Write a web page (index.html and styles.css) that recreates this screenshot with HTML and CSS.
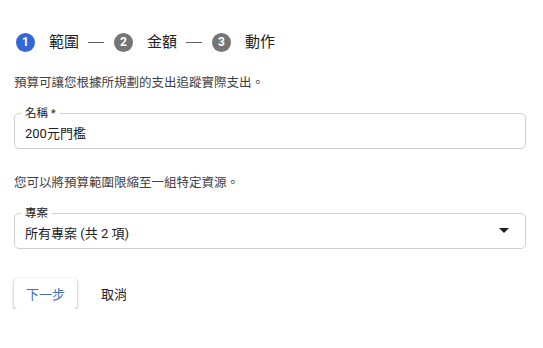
FILE: index.html
```html
<!DOCTYPE html>
<html lang="zh-Hant">
<head>
<meta charset="utf-8">
<link rel="stylesheet" href="styles.css">
</head>
<body>
<div class="page">
  <div class="stepper">
    <div class="step"><span class="num active">1</span><span class="step-label">範圍</span></div>
    <span class="dash"></span>
    <div class="step"><span class="num">2</span><span class="step-label">金額</span></div>
    <span class="dash"></span>
    <div class="step"><span class="num">3</span><span class="step-label">動作</span></div>
  </div>

  <p class="desc">預算可讓您根據所規劃的支出追蹤實際支出。</p>

  <div class="field">
    <span class="field-label">名稱 *</span>
    <span class="field-value">200元門檻</span>
  </div>

  <p class="desc desc2">您可以將預算範圍限縮至一組特定資源。</p>

  <div class="field select">
    <span class="field-label">專案</span>
    <span class="field-value">所有專案 (共 2 項)</span>
    <svg class="arrow" width="10" height="5" viewBox="0 0 10 5"><path d="M0 0h10L5 5z" fill="#202124"/></svg>
  </div>

  <div class="actions">
    <button class="btn primary">下一步</button>
    <button class="btn text">取消</button>
  </div>
</div>
</body>
</html>
```
FILE: styles.css
```css
html, body {
  margin: 0;
  padding: 0;
  background: #fff;
}
body {
  font-family: Roboto, "Noto Sans CJK TC", sans-serif;
  color: #202124;
}
.page {
  padding: 32px 17px 0 14px;
}
.stepper {
  display: flex;
  align-items: center;
  height: 20px;
  padding-left: 2px;
}
.step {
  display: flex;
  align-items: center;
}
.num {
  width: 19px;
  height: 19px;
  border-radius: 50%;
  background: #757575;
  color: #fff;
  font-size: 12px;
  font-weight: 700;
  display: flex;
  align-items: center;
  justify-content: center;
}
.num.active {
  background: #3367d6;
}
.step-label {
  font-size: 15px;
  margin-left: 14px;
  line-height: 20px;
}
.dash {
  width: 16px;
  height: 1px;
  background: #5f6368;
  margin: 0 10px 0 9px;
}
.desc {
  margin: 23px 0 0 0;
  font-size: 12.5px;
  line-height: 16px;
  color: #3c4043;
}
.desc2 {
  margin-top: 26px;
}
.field {
  position: relative;
  margin-top: 22px;
  height: 34px;
  border: 1px solid #cfcfcf;
  border-radius: 5px;
  display: flex;
  align-items: center;
  padding: 0 10px;
}
.select {
  margin-top: 22px;
}
.field-label {
  position: absolute;
  left: 6px;
  top: -8px;
  background: #fff;
  padding: 0 4px;
  font-size: 11.5px;
  line-height: 14px;
  color: #202124;
}
.field-value {
  font-size: 13px;
  padding-top: 2px;
}
.arrow {
  position: absolute;
  right: 16px;
  top: 14px;
}
.actions {
  display: flex;
  align-items: center;
  margin-top: 29px;
}
.btn {
  font-family: Roboto, "Noto Sans CJK TC", sans-serif;
  font-size: 13px;
  border: none;
  background: #fff;
  cursor: pointer;
}
.primary {
  width: 63px;
  height: 31px;
  border-radius: 4px;
  color: #3f6fb5;
  box-shadow: 0 1px 3px rgba(0,0,0,0.35), 0 1px 1px rgba(0,0,0,0.08);
}
.text {
  margin-left: 12px;
  color: #202124;
  padding: 0 12px;
  height: 31px;
}
```
